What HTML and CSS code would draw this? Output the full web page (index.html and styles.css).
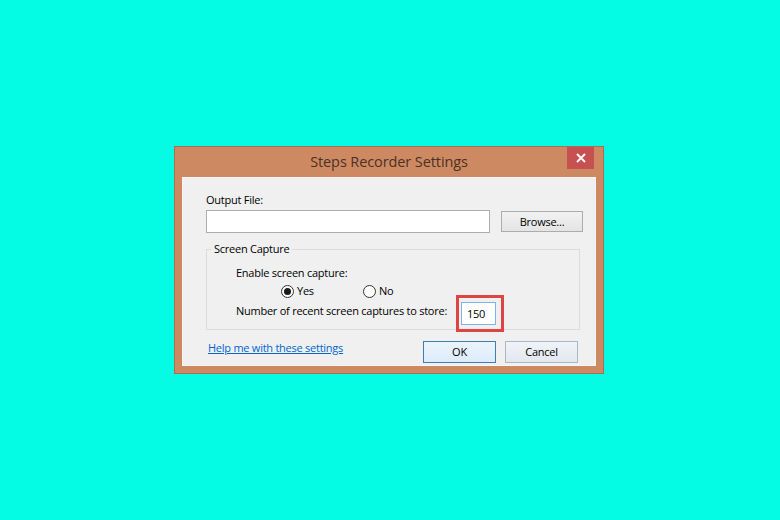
FILE: index.html
```html
<!DOCTYPE html>
<html lang="en">
<head>
  <meta charset="UTF-8" />
  <title>Steps Recorder Settings</title>
  <link rel="stylesheet" href="styles.css">
</head>
<body>

<div class="window">
  <div class="titlebar">
    <span></span>
    <span class="title">Steps Recorder Settings</span>
    <button class="close" title="Close">
      <svg width="10" height="10" viewBox="0 0 10 10">
        <path d="M1 1 L9 9 M9 1 L1 9" stroke="#fff" stroke-width="1.8" />
      </svg>
    </button>
  </div>

  <div class="client">
    <div class="field-label">Output File:</div>
    <div class="file-row">
      <input type="text" class="file-input" />
      <button class="btn browse">Browse...</button>
    </div>

    <fieldset class="group">
      <legend>Screen Capture</legend>
      <div class="group-line">Enable screen capture:</div>
      <div class="radio-row">
        <label class="radio-opt"><span class="radio checked"></span>Yes</label>
        <label class="radio-opt"><span class="radio"></span>No</label>
      </div>
      <div class="count-row">
        <span class="count-label">Number of recent screen captures to store:</span>
        <span class="highlight"><input type="text" class="count-input" value="150" /></span>
      </div>
    </fieldset>

    <div class="bottom-row">
      <a href="#" class="help">Help me with these settings</a>
      <div class="buttons">
        <button class="btn default">OK</button>
        <button class="btn cancel">Cancel</button>
      </div>
    </div>
  </div>
</div>

</body>
</html>
```

FILE: styles.css
```css
body {
  margin: 0;
  height: 520px;
  background-color: #04fbe4;
  font-family: "Open Sans", "Noto Sans", sans-serif;
  font-size: 11px;
  letter-spacing: -0.25px;
  color: #000;
  display: flex;
  justify-content: center;
  align-items: center;
}

.window {
  width: 430px;
  height: 228px;
  box-sizing: border-box;
  background-color: #cd8a62;
  border: 1px solid #a8704f;
  padding: 0 7px 7px 7px;
  display: flex;
  flex-direction: column;
  margin-right: 2px;
}

.titlebar {
  height: 30px;
  display: grid;
  grid-template-columns: 1fr auto 1fr;
  align-items: start;
}

.title {
  font-size: 14.5px;
  letter-spacing: -0.1px;
  color: #4b3122;
  padding-top: 5px;
}

.close {
  justify-self: end;
  margin-right: 2px;
  width: 27px;
  height: 22px;
  border: none;
  padding: 0;
  background-color: #c75050;
  display: flex;
  align-items: center;
  justify-content: center;
}

.client {
  flex: 1;
  background-color: #f0f0f0;
  border: 1px solid #f6f6f6;
  padding: 14px 15px 0 23px;
}

.field-label {
  line-height: 16px;
  margin-bottom: 2px;
}

.file-row {
  display: flex;
  align-items: center;
  gap: 11px;
}

.file-input {
  flex-shrink: 0;
  width: 284px;
  height: 23px;
  box-sizing: border-box;
  border: 1px solid #abadb3;
  background: #fff;
  margin: 0;
}

.btn {
  font-family: "Open Sans", "Noto Sans", sans-serif;
  font-size: 11px;
  letter-spacing: -0.25px;
  color: #000;
  height: 21px;
  box-sizing: border-box;
  padding: 0;
  border: 1px solid #acacac;
  background: linear-gradient(#f2f2f2, #e4e4e4);
}

.browse {
  flex-shrink: 0;
  width: 82px;
}

.group {
  margin: 8px 0 0 0;
  padding: 0;
  border: 1px solid #dcdcdc;
  height: 89px;
  box-sizing: border-box;
}

.group legend {
  margin-left: 4px;
  padding: 0 3px;
  line-height: 16px;
}

.group-line {
  margin-top: 8px;
  padding-left: 29px;
  line-height: 16px;
}

.radio-row {
  display: flex;
  padding-left: 74px;
  margin-top: 2px;
  line-height: 16px;
}

.radio-opt {
  display: flex;
  align-items: center;
  gap: 3px;
  width: 82px;
}

.radio {
  width: 11px;
  height: 11px;
  border: 1px solid #333;
  border-radius: 50%;
  background: #fff;
  display: flex;
  align-items: center;
  justify-content: center;
}

.radio.checked::after {
  content: "";
  width: 7px;
  height: 7px;
  border-radius: 50%;
  background: #1a1a1a;
}

.count-row {
  display: flex;
  align-items: center;
  padding-left: 29px;
  margin-top: -4px;
}

.count-label {
  width: 220px;
  white-space: nowrap;
  padding-bottom: 6px;
}

.highlight {
  display: inline-block;
  border: 3px solid #e04343;
  padding: 4px 5px 4px 2px;
  line-height: 0;
}

.count-input {
  width: 35px;
  height: 23px;
  box-sizing: border-box;
  border: 1px solid #7eb4ea;
  margin: 0;
  padding: 0 0 0 5px;
  font-family: "Open Sans", "Noto Sans", sans-serif;
  font-size: 11px;
  letter-spacing: -0.25px;
}

.bottom-row {
  display: flex;
  justify-content: space-between;
  align-items: center;
  margin-top: 10px;
  padding-right: 2px;
}

.help {
  color: #0066cc;
  text-decoration: underline;
  margin-left: 2px;
  margin-bottom: 8px;
}

.buttons {
  display: flex;
  gap: 9px;
}

.buttons .btn {
  width: 73px;
  height: 22px;
}

.default {
  border-color: #3c7fb1;
  background: linear-gradient(#ecf4fc, #dcecfc);
}

.cancel {
  border-color: #a6b8cc;
  background: linear-gradient(#f0f3f7, #e3e8ee);
}
```
